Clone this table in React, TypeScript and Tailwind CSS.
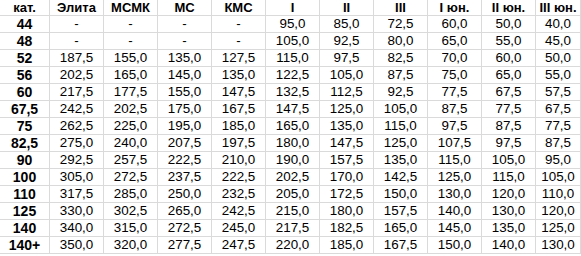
import React from "react";

const headers = ["кат.", "Элита", "МСМК", "МС", "КМС", "I", "II", "III", "I юн.", "II юн.", "III юн."];

const rows: string[][] = [
  ["44", "-", "-", "-", "-", "95,0", "85,0", "72,5", "60,0", "50,0", "40,0"],
  ["48", "-", "-", "-", "-", "105,0", "92,5", "80,0", "65,0", "55,0", "45,0"],
  ["52", "187,5", "155,0", "135,0", "127,5", "115,0", "97,5", "82,5", "70,0", "60,0", "50,0"],
  ["56", "202,5", "165,0", "145,0", "135,0", "122,5", "105,0", "87,5", "75,0", "65,0", "55,0"],
  ["60", "217,5", "177,5", "155,0", "147,5", "132,5", "112,5", "92,5", "77,5", "67,5", "57,5"],
  ["67,5", "242,5", "202,5", "175,0", "167,5", "147,5", "125,0", "105,0", "87,5", "77,5", "67,5"],
  ["75", "262,5", "225,0", "195,0", "185,0", "165,0", "135,0", "115,0", "97,5", "87,5", "77,5"],
  ["82,5", "275,0", "240,0", "207,5", "197,5", "180,0", "147,5", "125,0", "107,5", "97,5", "87,5"],
  ["90", "292,5", "257,5", "222,5", "210,0", "190,0", "157,5", "135,0", "115,0", "105,0", "95,0"],
  ["100", "305,0", "272,5", "237,5", "222,5", "202,5", "170,0", "142,5", "125,0", "115,0", "105,0"],
  ["110", "317,5", "285,0", "250,0", "232,5", "205,0", "172,5", "150,0", "130,0", "120,0", "110,0"],
  ["125", "330,0", "302,5", "265,0", "242,5", "215,0", "180,0", "157,5", "140,0", "130,0", "120,0"],
  ["140", "340,0", "315,0", "272,5", "245,0", "217,5", "182,5", "165,0", "145,0", "135,0", "125,0"],
  ["140+", "350,0", "320,0", "277,5", "247,5", "220,0", "185,0", "167,5", "150,0", "140,0", "130,0"],
];

export default function App() {
  return (
    <div className="w-[581px] h-[256px] overflow-hidden bg-white text-black font-['Liberation_Sans',Arial,sans-serif]">
      <div className="grid grid-cols-[50px_repeat(9,54px)_1fr] w-[581px]">
        {headers.map((h, i) => (
          <div
            key={"h" + i}
            className="h-[16px] flex items-center justify-center border-r border-b border-[#dadada] text-[13px] font-bold leading-none"
          >
            {h}
          </div>
        ))}
        {rows.map((r, ri) =>
          r.map((c, ci) => (
            <div
              key={ri + "-" + ci}
              className={
                "h-[17px] flex items-center justify-center border-r border-b border-[#dadada] leading-none " +
                (ci === 0 ? "text-[14px] font-bold" : "text-[13.4px]")
              }
            >
              {c}
            </div>
          ))
        )}
      </div>
    </div>
  );
}
